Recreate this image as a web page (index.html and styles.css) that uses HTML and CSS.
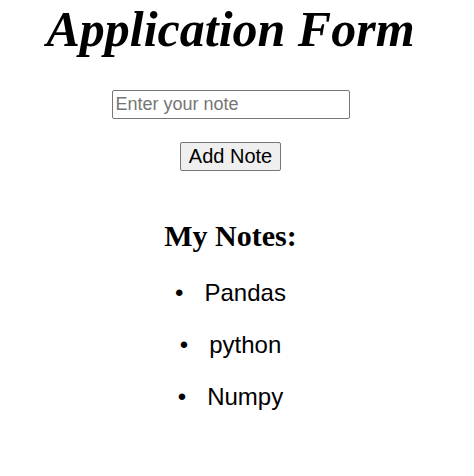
FILE: index.html
```html
<!DOCTYPE html>
<html>
<head>
<meta charset="utf-8">
<link rel="stylesheet" href="styles.css">
</head>
<body>
<h1 class="title">Application Form</h1>
<form class="note-form">
  <input class="note-input" type="text" placeholder="Enter your note">
  <button class="add-btn" type="button">Add Note</button>
</form>
<h2 class="notes-title">My Notes:</h2>
<ul class="notes">
  <li>Pandas</li>
  <li>python</li>
  <li>Numpy</li>
</ul>
</body>
</html>
```
FILE: styles.css
```css
body {
  margin: 0 13px 0 0;
  text-align: center;
  font-family: "Liberation Serif", serif;
}
.title {
  margin: 0;
  font-size: 50px;
  font-style: italic;
  font-weight: bold;
}
.note-form {
  display: flex;
  flex-direction: column;
  align-items: center;
  gap: 23px;
  margin-top: 32px;
}
.note-input {
  width: 238px;
  box-sizing: border-box;
  height: 29px;
  font-family: "Liberation Sans", sans-serif;
  font-size: 18px;
  padding: 1px 3px;
  border: 1px solid #767676;
  border-radius: 2px;
}
.note-input::placeholder {
  color: #757575;
}
.add-btn {
  font-family: "Liberation Sans", sans-serif;
  font-size: 20px;
  padding: 2px 8px;
  background: #efefef;
  border: 1px solid #767676;
  border-radius: 2px;
  color: #000;
}
.notes-title {
  font-size: 30px;
  margin: 48px 0 26px;
}
.notes {
  list-style: none;
  padding: 0;
  margin: 0;
  font-family: "Liberation Sans", sans-serif;
  font-size: 24px;
}
.notes li {
  margin-bottom: 24px;
}
.notes li::before {
  content: "\2022";
  display: inline-block;
  margin-right: 21px;
}
```
